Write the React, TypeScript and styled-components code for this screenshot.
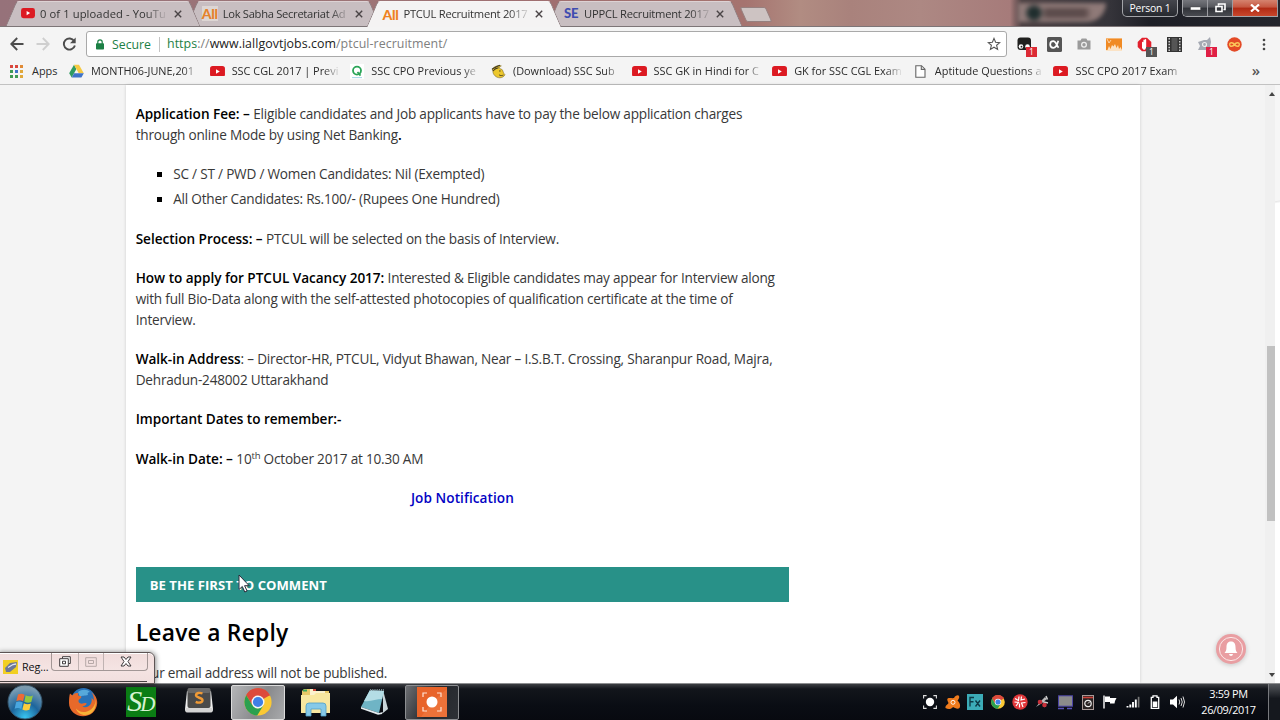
import React from "react";
import styled, { createGlobalStyle, css } from "styled-components";

const GlobalStyle = createGlobalStyle`
  * {
    box-sizing: border-box;
  }
  body {
    margin: 0;
    background: #fff;
    font-family: "Open Sans", "Noto Sans", sans-serif;
  }
  svg {
    display: block;
    flex: none;
  }
`;

const Screen = styled.div`
  position: relative;
  width: 1280px;
  height: 720px;
  overflow: hidden;
  display: flex;
  flex-direction: column;
`;

/* ---------- title bar ---------- */

const TitleBar = styled.header`
  height: 27px;
  flex: none;
  display: flex;
  justify-content: space-between;
  align-items: flex-start;
  padding: 0 2px 0 6px;
  border-bottom: 1px solid #7d7577;
  background: linear-gradient(
    90deg,
    #96727a 0,
    #9d7476 360px,
    #a06f70 560px,
    #a5736f 745px,
    #b18c82 800px,
    #a9827c 850px,
    #ad8883 920px,
    #a67b7a 1010px,
    #4a3f41 1022px,
    #35343a 1110px,
    #1e1f26 1150px,
    #24262d 1280px
  );
`;

const Tabs = styled.div`
  display: flex;
  position: relative;
  z-index: 1;
`;

const tabSide = css<{ $active?: boolean }>`
  content: "";
  position: absolute;
  top: 1px;
  bottom: 0;
  width: 51%;
  z-index: -1;
  background: ${(p) => (p.$active ? "#f4f3f3" : "#c8bec1")};
  border-top: 1px solid ${(p) => (p.$active ? "#f8f6f6" : "#ddd2d4")};
`;

const Tab = styled.div<{ $active?: boolean }>`
  position: relative;
  z-index: ${(p) => (p.$active ? 3 : 1)};
  width: 193px;
  height: ${(p) => (p.$active ? 27 : 26)}px;
  margin-right: -12.3px;
  padding: 1px 17px 0 15px;
  display: flex;
  align-items: center;
  isolation: isolate;
  &:first-child {
    z-index: 2;
  }
  &::before {
    ${tabSide}
    left: 5px;
    border-left: 1px solid #8b7b7e;
    border-radius: 3px 0 0 0;
    transform: skewX(-23deg);
  }
  &::after {
    ${tabSide}
    right: 4px;
    border-right: 1px solid #8b7b7e;
    border-radius: 0 3px 0 0;
    transform: skewX(23deg);
  }
  & > svg:last-child {
    margin-left: auto;
  }
`;

const TabTitle = styled.span<{ $ls?: number }>`
  width: 126px;
  margin-left: 5px;
  font-size: 11.2px;
  line-height: 16px;
  letter-spacing: ${(p) => p.$ls ?? -0.25}px;
  color: #333;
  white-space: nowrap;
  mask-image: linear-gradient(90deg, #000 84%, rgba(0, 0, 0, 0.15) 99%);
`;

const NewTab = styled.div`
  width: 26px;
  height: 15px;
  margin: 7px 0 0 14px;
  border: 1px solid #96807f;
  border-radius: 2px;
  background: #cdc3c2;
  transform: skewX(24deg);
`;

const WindowControls = styled.div`
  display: flex;
  align-items: flex-start;
`;

const Person = styled.div`
  width: 56px;
  height: 17px;
  margin-right: 4px;
  border: 1px solid #a3a4a8;
  border-top: none;
  border-radius: 0 0 5px 5px;
  background: linear-gradient(#45464d, #27292f);
  color: #fff;
  font-size: 10.4px;
  letter-spacing: -0.2px;
  line-height: 16px;
  text-align: center;
  white-space: nowrap;
`;

const ControlGroup = styled.div`
  display: flex;
  height: 17px;
  border: 1px solid #a3a4a8;
  border-top: none;
  border-right: none;
  border-radius: 0 0 0 5px;
  overflow: hidden;
`;

const Control = styled.div<{ $w: number; $close?: boolean }>`
  width: ${(p) => p.$w}px;
  display: flex;
  align-items: center;
  justify-content: center;
  border-right: 1px solid #9b9ca1;
  background: ${(p) =>
    p.$close
      ? "linear-gradient(#d5836f 0, #c55640 45%, #b02a14 50%, #c8472c)"
      : "linear-gradient(#75767c 0, #55575d 45%, #303238 50%, #484a50)"};
`;

const Blurred = styled.div`
  position: absolute;
  left: 1018px;
  top: 3px;
  width: 88px;
  height: 19px;
  border-radius: 0 0 22px 0;
  background: radial-gradient(circle at 16px 10px, #1f2e2e 5px, transparent 10px),
    linear-gradient(90deg, transparent 26%, #5c4c4c 32%, #5d4c4c 76%, transparent 84%) 0 5px / 100% 10px no-repeat,
    #8f7a78;
  filter: blur(2px);
`;

/* ---------- toolbar ---------- */

const Toolbar = styled.div`
  height: 31px;
  flex: none;
  display: flex;
  align-items: center;
  background: #f4f4f4;
  padding: 4px 0 1px 10px;
`;

const NavButtons = styled.div`
  display: flex;
  width: 76px;
  gap: 12px;
`;

const UrlBox = styled.div`
  width: 921px;
  height: 26px;
  display: flex;
  align-items: center;
  padding: 0 5px 0 9px;
  border: 1px solid #a9a9a9;
  border-radius: 3px;
  background: #fff;
  white-space: nowrap;
`;

const Secure = styled.span`
  width: 48px;
  margin-left: 8px;
  border-right: 1px solid #c4c4c4;
  font-size: 12.3px;
  line-height: 15px;
  color: #1c8045;
`;

const Url = styled.span`
  flex: 1;
  margin-left: 7px;
  font-size: 12.4px;
  line-height: 18px;
  letter-spacing: 0.05px;
  color: #808080;
`;

const Scheme = styled.span`
  color: #1c8045;
`;

const Host = styled.span`
  color: #222;
`;

const Extensions = styled.div`
  display: flex;
  margin-left: 2px;
`;

const Extension = styled.div`
  position: relative;
  width: 30px;
  height: 18px;
  display: flex;
  align-items: center;
  justify-content: center;
`;

const Badge = styled.span<{ $color: string }>`
  position: absolute;
  left: 17px;
  top: 12px;
  width: 11px;
  height: 10px;
  background: ${(p) => p.$color};
  color: #fff;
  font-size: 8.5px;
  line-height: 10px;
  text-align: center;
`;

const BookmarkBar = styled.nav`
  height: 27px;
  flex: none;
  display: flex;
  align-items: center;
  padding: 0 20px 0 10px;
  background: #f4f4f4;
  border-bottom: 1px solid #c2c2c2;
`;

const Bookmark = styled.div<{ $w?: number }>`
  flex: 0 0 ${(p) => p.$w ?? 140.65}px;
  display: flex;
  align-items: center;
`;

const BookmarkLabel = styled.span<{ $plain?: boolean }>`
  width: ${(p) => (p.$plain ? "auto" : "107px")};
  margin-left: ${(p) => (p.$plain ? 9 : 7)}px;
  font-size: 10.9px;
  line-height: 16px;
  color: #2b2b2b;
  white-space: nowrap;
  mask-image: ${(p) => (p.$plain ? "none" : "linear-gradient(90deg, #000 86%, rgba(0, 0, 0, 0.1) 100%)")};
`;

const Overflow = styled.span`
  margin-left: auto;
  padding-bottom: 2px;
  font-size: 15px;
  line-height: 16px;
  font-weight: 600;
  color: #555;
`;

/* ---------- page ---------- */

const Viewport = styled.main`
  flex: 1;
  min-height: 0;
  display: flex;
  background: #f4f4f4;
`;

const Sheet = styled.div`
  width: 1014px;
  margin-left: 126px;
  padding: 19px 0 0 9.7px;
  background: #fff;
  box-shadow: 0 0 3px rgba(0, 0, 0, 0.16);
  overflow: hidden;
`;

const Article = styled.article`
  width: 653.5px;
  color: #383838;
  font-size: 13.6px;
  line-height: 20.62px;
  letter-spacing: -0.21px;
  white-space: nowrap;
`;

const P = styled.p<{ $center?: boolean }>`
  margin: 0 0 18.9px;
  text-align: ${(p) => (p.$center ? "center" : "left")};
`;

const B = styled.strong`
  font-weight: 600;
  letter-spacing: -0.04px;
  color: #000;
`;

const Sup = styled.sup`
  font-size: 9.5px;
  line-height: 0;
  position: relative;
  top: -5px;
  vertical-align: baseline;
`;

const List = styled.ul`
  margin: 0 0 18.9px;
  padding: 0;
  list-style: none;
`;

const Item = styled.li`
  display: flex;
  align-items: center;
  padding-left: 21px;
  margin-bottom: 4.7px;
  &:last-child {
    margin-bottom: 0;
  }
  &::before {
    content: "";
    width: 5px;
    height: 5px;
    margin-right: 11.5px;
    background: #000;
  }
`;

const JobLink = styled.a`
  font-weight: 600;
  letter-spacing: 0.06px;
  color: #0303c4;
`;

const CommentBar = styled.h4`
  margin: 57.8px 0 0;
  height: 35.4px;
  padding-left: 14px;
  background: #289188;
  color: #fff;
  font-size: 13.1px;
  line-height: 36px;
  font-weight: 700;
  letter-spacing: 0.02px;
`;

const ReplyTitle = styled.h3`
  margin: 15px 0 14.6px;
  font-size: 22.8px;
  line-height: 31px;
  font-weight: 600;
  letter-spacing: 0.25px;
  color: #000;
`;

const ScrollTrack = styled.div`
  width: 10px;
  margin-left: auto;
  display: flex;
  flex-direction: column;
  align-items: center;
  justify-content: space-between;
  padding: 7px 0 6px 4px;
  background: #f0f0f0;
`;

const ScrollThumb = styled.div`
  width: 8px;
  height: 175px;
  margin: 97px 0 0 -2px;
  background: #c1c1c1;
`;

const Edge = styled.div`
  width: 5px;
  background: linear-gradient(170deg, #f6f6f6 0, #f6f6f6 114px, #e9e9e9 115px, #fff 117px);
`;

const Bell = styled.div`
  position: absolute;
  left: 1216px;
  top: 634px;
  width: 30px;
  height: 30px;
  border-radius: 50%;
  background: #e99ea2;
  box-shadow: 0 1px 5px rgba(0, 0, 0, 0.2);
`;

/* ---------- floating mini window ---------- */

const MiniWindow = styled.div`
  position: absolute;
  left: -2px;
  top: 652px;
  width: 157px;
  height: 32px;
  display: flex;
  align-items: flex-start;
  padding-left: 4px;
  border: 1px solid #5d5454;
  border-radius: 0 6px 0 0;
  background: linear-gradient(#f0dcdb, #f5e4e3 55%, #f1dedd);
  box-shadow: 1px 0 5px rgba(0, 0, 0, 0.45), inset 0 1px 0 #fff;
  &::after {
    content: "";
    position: absolute;
    left: 0;
    right: 7px;
    bottom: 1px;
    height: 1px;
    background: #4a4343;
  }
`;

const MiniTitle = styled.span`
  width: 29px;
  margin: 6px 0 0 3px;
  font-size: 10.8px;
  line-height: 15px;
  letter-spacing: -0.1px;
  color: #111;
`;

const MiniButtons = styled.div`
  display: flex;
  height: 18px;
  border: 1px solid #a39796;
  border-top: none;
  border-radius: 0 0 4px 4px;
`;

const MiniButton = styled.div<{ $w: number }>`
  width: ${(p) => p.$w}px;
  display: flex;
  align-items: center;
  justify-content: center;
  & + & {
    border-left: 1px solid #c0b3b2;
  }
`;

const Cursor = styled.svg`
  position: absolute;
  left: 238px;
  top: 574px;
`;

/* ---------- taskbar ---------- */

const Taskbar = styled.footer`
  position: relative;
  height: 37px;
  flex: none;
  display: flex;
  align-items: center;
  border-top: 1px solid #8d8e90;
  background: linear-gradient(#3c3e42 0, #12151b 5px, #0a0d14 60%, #080a10);
`;

const TaskButton = styled.div<{ $open?: "active" | "idle" }>`
  width: 58.2px;
  height: 36px;
  margin: 0;
  display: flex;
  align-items: center;
  justify-content: center;
  ${(p) =>
    p.$open &&
    css`
      width: 54.2px;
      margin: 0 2px;
      height: 35px;
      border: 1px solid ${p.$open === "active" ? "#dcdcdc" : "#8c8e91"};
      border-radius: 2px;
      background: ${p.$open === "active"
        ? "linear-gradient(115deg, #b5b6b8, #88898c 55%, #a9aaac)"
        : "linear-gradient(115deg, #6d6f73, #24272c 50%, #2e3136)"};
    `}
`;

const StartButton = styled.div`
  width: 54px;
  padding-left: 7px;
`;

const Tray = styled.div`
  margin-left: auto;
  display: flex;
  align-items: center;
`;

const TrayIcon = styled.div`
  width: 22.5px;
  display: flex;
  justify-content: center;
`;

const Clock = styled.div`
  width: 79px;
  font-size: 10.9px;
  line-height: 16px;
  letter-spacing: -0.35px;
  text-align: center;
  color: #fff;
`;

const ShowDesktop = styled.div`
  width: 12px;
  height: 36px;
  border-left: 1px solid #77797d;
  background: linear-gradient(#55585d, #15181e 40%);
`;

/* ---------- icons ---------- */

const YouTube = ({ size = 15 }: { size?: number }) => (
  <svg width={size} height={size * 0.73} viewBox="0 0 15 11">
    <rect width="15" height="11" rx="2.6" fill="#dc1a22" />
    <path d="M6 3.2v4.6l3.8-2.3z" fill="#fff" />
  </svg>
);

const CloseX = ({ color = "#4a4446", size = 8 }) => (
  <svg width={size} height={size} viewBox="0 0 8 8">
    <path d="M.8.8l6.4 6.4M7.2.8L.8 7.2" stroke={color} strokeWidth="1.4" />
  </svg>
);

const LetterIcon = styled.span<{ $color: string; $size?: number; $bg?: string; $w?: number }>`
  width: ${(p) => p.$w ?? 16}px;
  height: 15px;
  flex: none;
  font-family: Lato, "Open Sans", sans-serif;
  font-weight: 900;
  font-size: ${(p) => p.$size ?? 14}px;
  line-height: 15px;
  letter-spacing: -0.3px;
  text-align: center;
  color: ${(p) => p.$color};
  background: ${(p) => p.$bg ?? "transparent"};
`;

const ChromeLogo = ({ size }: { size: number }) => (
  <svg width={size} height={size} viewBox="0 0 28 28">
    <circle cx="14" cy="14" r="13.6" fill="#fbc934" />
    <path d="M14 14L2.2 7.2A13.6 13.6 0 0 1 25.8 7.2z" fill="#dd4a3c" />
    <path d="M14 7.5h12.1A13.6 13.6 0 0 0 2.2 7.2L8.4 17.5z" fill="#dd4a3c" />
    <path d="M2.2 7.2A13.6 13.6 0 0 0 13.2 27.6l6.3-10.3-5.6 3.2-5.5-3.2z" fill="#2ba04f" />
    <circle cx="14" cy="14" r="6.5" fill="#f5f5f5" />
    <circle cx="14" cy="14" r="5.1" fill="#3f7fe6" />
  </svg>
);

const AppsGrid = () => (
  <svg width="13" height="13" viewBox="0 0 13 13">
    {["#d9463c", "#d9463c", "#e08a35", "#3f9a54", "#3d74c9", "#e0a83a", "#3f9a54", "#3f9a54", "#e0a83a"].map(
      (c, i) => (
        <rect key={i} x={(i % 3) * 5} y={Math.floor(i / 3) * 5} width="3" height="3" fill={c} />
      )
    )}
  </svg>
);

const DriveIcon = () => (
  <svg width="15" height="14" viewBox="0 0 15 14">
    <path d="M5 .8L.2 9.2 2.7 13.4 7.4 5z" fill="#2f9b62" />
    <path d="M5 .8h5l4.8 8.4H9.8z" fill="#f6c941" />
    <path d="M5.1 9.2h9.7l-2.4 4.2H2.7z" fill="#3f73c8" />
  </svg>
);

const QIcon = () => (
  <svg width="14" height="15" viewBox="0 0 14 15">
    <rect width="14" height="15" fill="#fff" />
    <circle cx="7" cy="6.6" r="4" fill="none" stroke="#2aa557" strokeWidth="1.8" />
    <path d="M7.5 8l3 3.6" stroke="#2aa557" strokeWidth="1.8" />
    <path d="M2 13.6h10" stroke="#8cc9e0" strokeWidth=".8" />
  </svg>
);

const YellowFace = () => (
  <svg width="15" height="15" viewBox="0 0 16 15">
    <path d="M1.5 5C3 2 7 .8 11 1.5 9 2 8.5 3 9 4l3 1.6c1.2 1.8.8 3.4 2.8 5.2-.4 2-3 3.4-5.4 3.4C5.5 14.2 2 11 2 7z" fill="#ecc72c" stroke="#7a6520" strokeWidth=".6" />
    <path d="M1 5C3.500 4 5 2.500 9.500.8M2 7c2-2.400 4-3.400 6-3.600" fill="none" stroke="#3d3621" strokeWidth="1.100" />
    <path d="M9.500 6v1.800M8.500 11c1.600 1.200 3.400 1 4.800.2" fill="none" stroke="#3d3621" strokeWidth=".9" />
  </svg>
);

const FileIcon = () => (
  <svg width="11" height="13" viewBox="0 0 11 13">
    <path d="M.8.7h5.700l3.500 3.500v8.100H.8z" fill="#fff" stroke="#666" strokeWidth="1.100" />
    <path d="M6.300.7v3.700h3.700" fill="none" stroke="#666" strokeWidth="1.100" />
  </svg>
);

const FileSlot = styled.span`
  width: 15px;
  display: flex;
  justify-content: center;
`;

const BackIcon = ({ color, flip }: { color: string; flip?: boolean }) => (
  <svg width="14" height="14" viewBox="0 0 14 14">
    <path
      d="M7.200 1L1.300 7l5.900 6M1.500 7h12"
      fill="none"
      stroke={color}
      strokeWidth="1.900"
      transform={flip ? "translate(14 0) scale(-1 1)" : undefined}
    />
  </svg>
);

const ReloadIcon = () => (
  <svg width="15" height="14" viewBox="0 0 15 14">
    <path d="M12.200 4A5.600 5.600 0 1 0 12.900 8.500" fill="none" stroke="#4c4c4c" strokeWidth="1.900" />
    <path d="M13.700.4v5.800H8z" fill="#4c4c4c" />
  </svg>
);

const LockIcon = () => (
  <svg width="8" height="11" viewBox="0 0 8 11">
    <rect y="4.200" width="8" height="6.300" rx=".8" fill="#1c8045" />
    <path d="M1.800 5V3a2.200 2.200 0 0 1 4.400 0v2" fill="none" stroke="#1c8045" strokeWidth="1.200" />
  </svg>
);

const StarIcon = () => (
  <svg width="14" height="14" viewBox="0 0 14 14">
    <path d="M7 1.400l1.600 3.900 4.200.3-3.200 2.700 1 4.100L7 10.200l-3.600 2.200 1-4.100L1.200 5.600l4.200-.3z" fill="none" stroke="#555" strokeWidth="1.100" />
  </svg>
);

const MonkeyIcon = () => (
  <svg width="15" height="14" viewBox="0 0 15 14">
    <rect x=".5" y=".5" width="13.500" height="12.500" rx="3" fill="#20201f" />
    <circle cx="4" cy="9.500" r="2.300" fill="#fff" />
    <circle cx="10.500" cy="9.500" r="2.300" fill="#fff" />
    <circle cx="4.500" cy="9.700" r=".9" fill="#222" />
  </svg>
);

const AlphaIcon = () => (
  <svg width="15" height="15" viewBox="0 0 15 15">
    <rect width="15" height="15" rx="1.500" fill="#555" />
    <path d="M11.300 3.800C10 9 8.500 10.800 6.300 10.800 4.400 10.800 3.200 9.400 3.200 7.500S4.400 4.200 6.300 4.200c2.500 0 3.300 4 5.200 6.500" fill="none" stroke="#fff" strokeWidth="1.700" />
  </svg>
);

const CameraIcon = () => (
  <svg width="14" height="12" viewBox="0 0 14 12">
    <path d="M.5 2.500h3L4.700.5h4.600l1.200 2h3v9H.5z" fill="#9b9b9b" />
    <circle cx="7" cy="6.700" r="3" fill="#eee" />
    <circle cx="7" cy="6.700" r="1.700" fill="#9b9b9b" />
  </svg>
);

const ChartIcon = () => (
  <svg width="16" height="13" viewBox="0 0 16 13">
    <rect width="16" height="13" fill="#fbe3c6" />
    <path d="M0 .5h16v11.500l-1.500-3L13 11l-1-4-1.500 3-1.500-4-1.500 2.500L6 7l-1.500 4-1.500-3L1.500 12H0z" fill="#f08a24" />
    <path d="M1 1l2 4 2-3" fill="none" stroke="#fbd9b4" strokeWidth=".9" />
  </svg>
);

const HandIcon = () => (
  <svg width="15" height="15" viewBox="0 0 15 15">
    <path d="M5 .7h5L14.300 5v5L10 14.300H5L.7 10V5z" fill="#e2202d" />
    <path d="M5 11V5.500c0-1 1.400-1 1.400 0V3.200c0-1 1.400-1 1.400 0v-.4c0-1 1.400-1 1.400 0v7.700L8 12.800H6.500z" fill="#fff" />
  </svg>
);

const FilmIcon = () => (
  <svg width="15" height="15" viewBox="0 0 15 15">
    <rect width="15" height="15" fill="#333" />
    <rect x="4.500" y="1" width="6" height="13" fill="#555" />
    <path d="M2.200 1v14M12.800 1v14" stroke="#ddd" strokeWidth="1.400" strokeDasharray="1.500 1.400" />
  </svg>
);

const CatIcon = () => (
  <svg width="15" height="14" viewBox="0 0 15 14">
    <path d="M1 13l2-4-2-4 3-1 3-1 3 0 3-3 1 5-1 5 1 3H8z" fill="#a5a9b3" />
    <circle cx="7.500" cy="7.500" r="2" fill="none" stroke="#eee" strokeWidth="1.200" />
  </svg>
);

const InfinityIcon = () => (
  <svg width="15" height="15" viewBox="0 0 15 15">
    <circle cx="7.500" cy="7.500" r="7.200" fill="#e34a26" />
    <path d="M7.500 7.500C6 5.300 2.700 5 2.700 7.500s3.300 2.200 4.800 0 4.800-2.500 4.800 0-3.300 2.200-4.800 0z" fill="none" stroke="#fbc85a" strokeWidth="1.400" />
  </svg>
);

const MenuDots = () => (
  <svg width="4" height="13" viewBox="0 0 4 13">
    <circle cx="2" cy="2" r="1.300" fill="#444" />
    <circle cx="2" cy="6.500" r="1.300" fill="#444" />
    <circle cx="2" cy="11" r="1.300" fill="#444" />
  </svg>
);

const StartOrb = () => (
  <svg width="36" height="36" viewBox="0 0 36 36">
    <defs>
      <radialGradient id="orb" cx=".5" cy=".95" r=".95">
        <stop offset="0" stopColor="#38c5f0" />
        <stop offset=".45" stopColor="#1d659c" />
        <stop offset="1" stopColor="#8fa9b8" />
      </radialGradient>
    </defs>
    <circle cx="18" cy="18" r="17" fill="url(#orb)" stroke="#33546b" />
    <path d="M11 10.500c2.500-1.300 4.500-1 6.600.2l-1.500 6.500c-2.100-1.200-4.200-1.300-6.700-.3z" fill="#ee6a35" />
    <path d="M18.700 11.300c2.600 1.300 4.500 1.300 7.200.1l-1.600 6.600c-2.500 1-4.500.9-7-.3z" fill="#94c83f" />
    <path d="M9.100 18.200c2.500-1 4.600-.8 6.700.4l-1.500 6.300c-2.200-1.200-4.200-1.300-6.700-.2z" fill="#49a6df" />
    <path d="M16.900 19.200c2.400 1.200 4.500 1.200 7 .2l-1.500 6.300c-2.600 1.100-4.600 1-7-.2z" fill="#fbcd3c" />
  </svg>
);

const FirefoxIcon = () => (
  <svg width="30" height="30" viewBox="0 0 30 30">
    <circle cx="15.500" cy="13.500" r="12.500" fill="#2872b8" />
    <path d="M10 5c4-3 9-3 12 0-2 0-3 1-2 3-3 1-6 0-8 2z" fill="#57a9db" />
    <path d="M2 6.500l2.500 2C6 6 8.500 5.500 10.500 6.300 9.500 8 10 9 12.500 9.300c1.500.2 1 1.700-1.200 3-1.300 1.500-1 3 .7 4 2.500 1.300 4.500-.8 6.500 0 .5 1.400-2 3-4.500 3.300 6 2.400 11-2.600 9.500-8.600 1.500 1 2 2 2.200 3 .6-3-.5-6.500-2.500-8.700 4 2.500 6.300 6.500 6 11C28.600 24 22.500 29.300 15 29.300S1 23.500 1 16C1 12 1.200 9 2 6.500z" fill="#e8692a" />
    <path d="M27 10c1.700 6-1.500 12.500-8 14.500-5 1.500-9-.5-11-3 1 4 5 6.500 9 6.500 7 0 13-6 10-18z" fill="#f7b337" />
  </svg>
);

const SdIcon = styled.div`
  display: flex;
  width: 30px;
  height: 30px;
  padding-left: 1px;
  background: #0b7d14;
  color: #d6f3d3;
  font-family: "Liberation Serif", "Times New Roman", serif;
  font-style: italic;
  font-size: 30px;
  line-height: 27px;
  white-space: nowrap;
`;

const SdSmall = styled.span`
  margin-left: -2px;
  padding-top: 4px;
  font-size: 21px;
  line-height: 26px;
`;

const SublimeIcon = () => (
  <svg width="30" height="30" viewBox="0 0 30 30">
    <path d="M3 4h24l2 18q0 3-2 3H3q-2 0-2-3z" fill="#eee" />
    <path d="M1.500 21h27v3q0 1.500-2 1.500h-23q-2 0-2-1.500z" fill="#d4d4d4" />
    <rect x="3.500" y="1" width="23" height="20" rx="2" fill="#4a4a4a" />
    <rect x="3.500" y="1" width="23" height="5" rx="2" fill="#686868" />
    <path d="M18.500 6.500c-2.500-1-6.500-.8-6.500 1.800s6.500 2.300 6.500 4.900-4 3-6.800 1.700" fill="none" stroke="#f09a35" strokeWidth="2.400" />
  </svg>
);

const ExplorerIcon = () => (
  <svg width="32" height="30" viewBox="0 0 32 30">
    <path d="M2 4l2-2h7l1 2h17v22H2z" fill="#e8c868" />
    <path d="M10 2h5l1 2h9v6H10z" fill="#fbf2cd" />
    <path d="M1 8h13l2-2h14v20H1z" fill="#f8e7a0" />
    <path d="M3 3.500h4" stroke="#3aa65b" strokeWidth="2" />
    <path d="M13 3h3" stroke="#d0473b" strokeWidth="2" />
    <path d="M6 29V19q0-3 3-3h14q3 0 3 3v10h-5v-7H11v7z" fill="#86c9e8" stroke="#4f9fc6" strokeWidth=".8" />
  </svg>
);

const NotepadIcon = () => (
  <svg width="30" height="30" viewBox="0 0 30 30">
    <path d="M24 3l5 19-5 4z" fill="#c9d5d9" />
    <path d="M11 3l14 1-5 22L2 20z" fill="#6fb4c5" />
    <path d="M11 3l14 1-2 8C17 12 12 15 5 14z" fill="#b4dde5" />
    <path d="M2 20l18 6 4-1-1 2-4 .7L2 21.700z" fill="#e4edf0" />
    <path d="M11 3h14" stroke="#7d8d93" strokeWidth="2" strokeDasharray="1.200 1" />
  </svg>
);

const CaptureIcon = () => (
  <svg width="30" height="30" viewBox="0 0 30 30">
    <rect width="30" height="30" fill="#e8642a" />
    <path d="M15 15L30 2v28H4z" fill="#ef7b45" opacity=".6" />
    <path d="M6 10V6h4M20 6h4v4M24 20v4h-4M10 24H6v-4" fill="none" stroke="#fde3d6" strokeWidth="1.200" />
    <circle cx="15" cy="15" r="5.500" fill="#fff" />
  </svg>
);

const trayIcons = [
  <svg width="14" height="14" viewBox="0 0 14 14">
    <path d="M.6 3.500V.6h3M10.400.6h3v2.900M13.400 10.400v3h-3M3.600 13.400h-3v-3" fill="none" stroke="#ddd" strokeWidth="1.100" />
    <circle cx="7" cy="7" r="4.200" fill="#fff" />
  </svg>,
  <svg width="16" height="15" viewBox="0 0 16 15">
    <path d="M9 3c1-2 3-3 4.500-2.500C15 1.500 14 4 12.500 5.500c2 2 3.500 5 2 7.500-2 2-5-.5-6.500-1-2 2.500-5 2.500-7.500 1C0 10.500 2.500 10 3.500 8 2.500 6 1.500 4 3 3.300 5 2.500 7 3.500 9 3z" fill="#ef7b1d" />
    <circle cx="8" cy="7.300" r="2" fill="none" stroke="#fff" strokeWidth=".9" />
  </svg>,
  <svg width="16" height="16" viewBox="0 0 16 16">
    <rect width="16" height="16" fill="#3cacb8" />
    <path d="M3 12.500v-9h4M3 7.800h3.500M8.500 6.500l4.500 6M13 6.500l-4.500 6" fill="none" stroke="#0d3a47" strokeWidth="1.400" />
  </svg>,
  <ChromeLogo size={14} />,
  <svg width="16" height="16" viewBox="0 0 16 16">
    <circle cx="8" cy="8" r="7.700" fill="#e0373a" />
    <path d="M7 2.500l-.5 4-3.500-2M9.500 2.500L9 6l4-1M2.500 8l4 .5L4 12M13.500 8.500L9.500 9l1.500 4M7.500 13.500V9.500" fill="none" stroke="#fff" strokeWidth="1.200" />
  </svg>,
  <svg width="15" height="14" viewBox="0 0 15 14">
    <path d="M1 12l5-6 4-4 2 2-5 4z" fill="#b9b9b9" />
    <path d="M11 1l1.500 3.500M13 8l-4-1 1 5" stroke="#d0d0d0" strokeWidth="1.500" />
    <circle cx="5" cy="7" r="2.300" fill="#c9313b" />
    <circle cx="9.500" cy="10" r="2.300" fill="#c9313b" />
  </svg>,
  <svg width="15" height="15" viewBox="0 0 15 15">
    <rect x=".5" y=".8" width="14" height="10.400" fill="#8b8b8b" stroke="#4a43a5" />
    <path d="M0 13.500h6M9 13.500h5" stroke="#5850b8" strokeWidth="1.600" />
  </svg>,
  <svg width="12" height="15" viewBox="0 0 12 15">
    <rect x=".5" y=".5" width="11" height="14" fill="#292323" stroke="#a89a98" />
    <path d="M1 2.500h10" stroke="#cc4038" strokeWidth="1.600" />
    <circle cx="6" cy="8.500" r="3.200" fill="none" stroke="#eee" strokeWidth="1.200" />
    <path d="M6 8.500l1.500-1.500" stroke="#eee" />
  </svg>,
  <svg width="14" height="14" viewBox="0 0 14 14">
    <path d="M1 .5v13" stroke="#fff" strokeWidth="1.400" />
    <path d="M2 1.500h5v1.500h6.500L12 6l-.5 2.500H7V7H2z" fill="#fff" />
  </svg>,
  <svg width="14" height="12" viewBox="0 0 14 12">
    <path d="M1.500 10v1.500M4.300 8.500v3M7 6v5.500M9.800 3.500v8" stroke="#fff" strokeWidth="1.900" />
    <path d="M12.600.8v10.700" stroke="#777" strokeWidth="1.700" />
  </svg>,
  <svg width="10" height="14" viewBox="0 0 10 14">
    <path d="M3 .8h4v1.500h1.700v11H1.300v-11H3z" fill="none" stroke="#fff" strokeWidth="1.300" />
    <rect x="2.700" y="6.500" width="4.600" height="5.500" fill="#fff" />
  </svg>,
  <svg width="15" height="14" viewBox="0 0 15 14">
    <path d="M0 4.500h3L7 .8v12.400L3 9.500H0z" fill="#fff" />
    <path d="M9 4.500q1.500 2.500 0 5M11 3q2.500 4 0 8M13 1.500q3 5.500 0 11" fill="none" stroke="#ddd" strokeWidth="1" />
  </svg>,
];

const App = () => {
  return (
    <Screen>
      <GlobalStyle />
      <TitleBar>
        <Tabs>
          <Tab>
            <YouTube size={14} />
            <TabTitle $ls={0.1}>0 of 1 uploaded - YouTu</TabTitle>
            <CloseX />
          </Tab>
          <Tab>
            <LetterIcon $color="#e5822c" $bg="#ddd6d4">All</LetterIcon>
            <TabTitle $ls={-0.3}>Lok Sabha Secretariat Ad</TabTitle>
            <CloseX />
          </Tab>
          <Tab $active>
            <LetterIcon $color="#ef8222">All</LetterIcon>
            <TabTitle>PTCUL Recruitment 2017</TabTitle>
            <CloseX />
          </Tab>
          <Tab>
            <LetterIcon $color="#3f4db0" $size={13}>SE</LetterIcon>
            <TabTitle>UPPCL Recruitment 2017</TabTitle>
            <CloseX />
          </Tab>
          <NewTab />
        </Tabs>
        <Blurred />
        <WindowControls>
          <Person>Person 1</Person>
          <ControlGroup>
            <Control $w={25}>
              <svg width="11" height="5" viewBox="0 0 11 5">
                <rect x=".5" y="1" width="10" height="3" fill="#fff" stroke="#444" strokeWidth=".4" />
              </svg>
            </Control>
            <Control $w={25}>
              <svg width="11" height="10" viewBox="0 0 11 10">
                <path d="M3.500 2.500V1H10v5.500H8.500M1 3.500h6v5H1z" fill="none" stroke="#fff" strokeWidth="1.600" />
              </svg>
            </Control>
            <Control $w={45} $close>
              <svg width="10" height="8" viewBox="0 0 10 8">
                <path d="M1 .5l8 7M9 .5l-8 7" stroke="#fff" strokeWidth="2.200" />
              </svg>
            </Control>
          </ControlGroup>
        </WindowControls>
      </TitleBar>

      <Toolbar>
        <NavButtons>
          <BackIcon color="#4c4c4c" />
          <BackIcon color="#cfcfcf" flip />
          <ReloadIcon />
        </NavButtons>
        <UrlBox>
          <LockIcon />
          <Secure>Secure</Secure>
          <Url>
            <Scheme>https</Scheme>://<Host>www.iallgovtjobs.com</Host>/ptcul-recruitment/
          </Url>
          <StarIcon />
        </UrlBox>
        <Extensions>
          <Extension>
            <MonkeyIcon />
            <Badge $color="#dc2a35">1</Badge>
          </Extension>
          <Extension><AlphaIcon /></Extension>
          <Extension><CameraIcon /></Extension>
          <Extension><ChartIcon /></Extension>
          <Extension>
            <HandIcon />
            <Badge $color="#555">1</Badge>
          </Extension>
          <Extension><FilmIcon /></Extension>
          <Extension>
            <CatIcon />
            <Badge $color="#e01f45">1</Badge>
          </Extension>
          <Extension><InfinityIcon /></Extension>
          <Extension><MenuDots /></Extension>
        </Extensions>
      </Toolbar>

      <BookmarkBar>
        <Bookmark $w={59}>
          <AppsGrid />
          <BookmarkLabel $plain>Apps</BookmarkLabel>
        </Bookmark>
        <Bookmark>
          <DriveIcon />
          <BookmarkLabel>MONTH06-JUNE,201</BookmarkLabel>
        </Bookmark>
        <Bookmark>
          <YouTube />
          <BookmarkLabel>SSC CGL 2017 | Previ</BookmarkLabel>
        </Bookmark>
        <Bookmark>
          <QIcon />
          <BookmarkLabel>SSC CPO Previous ye</BookmarkLabel>
        </Bookmark>
        <Bookmark>
          <YellowFace />
          <BookmarkLabel>(Download) SSC Sub</BookmarkLabel>
        </Bookmark>
        <Bookmark>
          <YouTube />
          <BookmarkLabel>SSC GK in Hindi for C</BookmarkLabel>
        </Bookmark>
        <Bookmark>
          <YouTube />
          <BookmarkLabel>GK for SSC CGL Exam</BookmarkLabel>
        </Bookmark>
        <Bookmark>
          <FileSlot>
            <FileIcon />
          </FileSlot>
          <BookmarkLabel>Aptitude Questions a</BookmarkLabel>
        </Bookmark>
        <Bookmark>
          <YouTube />
          <BookmarkLabel>SSC CPO 2017 Exam</BookmarkLabel>
        </Bookmark>
        <Overflow>»</Overflow>
      </BookmarkBar>

      <Viewport>
        <Sheet>
          <Article>
            <P>
              <B>Application Fee: – </B>Eligible candidates and Job applicants have to pay the below application charges
              <br />
              through online Mode by using Net Banking<B>.</B>
            </P>
            <List>
              <Item>SC / ST / PWD / Women Candidates: Nil (Exempted)</Item>
              <Item>All Other Candidates: Rs.100/- (Rupees One Hundred)</Item>
            </List>
            <P>
              <B>Selection Process: – </B>PTCUL will be selected on the basis of Interview.
            </P>
            <P>
              <B>How to apply for PTCUL Vacancy 2017:</B> Interested &amp; Eligible candidates may appear for Interview along
              <br />
              with full Bio-Data along with the self-attested photocopies of qualification certificate at the time of
              <br />
              Interview.
            </P>
            <P>
              <B>Walk-in Address</B>: – Director-HR, PTCUL, Vidyut Bhawan, Near – I.S.B.T. Crossing, Sharanpur Road, Majra,
              <br />
              Dehradun-248002 Uttarakhand
            </P>
            <P>
              <B>Important Dates to remember:-</B>
            </P>
            <P>
              <B>Walk-in Date: – </B>10<Sup>th</Sup> October 2017 at 10.30 AM
            </P>
            <P $center>
              <JobLink>Job Notification</JobLink>
            </P>
            <CommentBar>BE THE FIRST TO COMMENT</CommentBar>
            <ReplyTitle>Leave a Reply</ReplyTitle>
            <P>Your email address will not be published.</P>
          </Article>
        </Sheet>
        <ScrollTrack>
          <svg width="6" height="4" viewBox="0 0 6 4"><path d="M0 4l3-4 3 4z" fill="#444" /></svg>
          <ScrollThumb />
          <svg width="6" height="4" viewBox="0 0 6 4"><path d="M0 0l3 4 3-4z" fill="#444" /></svg>
        </ScrollTrack>
        <Edge />
      </Viewport>

      <Taskbar>
        <StartButton><StartOrb /></StartButton>
        <TaskButton><FirefoxIcon /></TaskButton>
        <TaskButton>
          <SdIcon>
            S<SdSmall>D</SdSmall>
          </SdIcon>
        </TaskButton>
        <TaskButton><SublimeIcon /></TaskButton>
        <TaskButton $open="active"><ChromeLogo size={28} /></TaskButton>
        <TaskButton><ExplorerIcon /></TaskButton>
        <TaskButton><NotepadIcon /></TaskButton>
        <TaskButton $open="idle"><CaptureIcon /></TaskButton>
        <Tray>
          {trayIcons.map((icon, i) => (
            <TrayIcon key={i}>{icon}</TrayIcon>
          ))}
          <Clock>
            3:59 PM
            <br />
            26/09/2017
          </Clock>
          <ShowDesktop />
        </Tray>
      </Taskbar>

      <Bell>
        <svg width="30" height="30" viewBox="0 0 30 30">
          <circle cx="15" cy="15" r="11.600" fill="none" stroke="#fbe9e9" strokeWidth="1" />
          <path d="M15 7.500c-3.500 0-4.500 2.500-4.500 5.500 0 3.500-.8 4.500-2 6h13c-1.200-1.500-2-2.500-2-6 0-3-1-5.500-4.500-5.500z" fill="#fff" />
          <path d="M13 20h4q-.3 2-2 2t-2-2z" fill="#fff" />
        </svg>
      </Bell>

      <MiniWindow>
        <svg width="16" height="22" viewBox="0 0 16 22">
          <rect y="7" width="15" height="14" fill="#f2cf22" />
          <path d="M2 15l5-5 7-1-1 5-6 5H3z" fill="#6d7796" />
          <path d="M5 14.500l5-3 3-.5" stroke="#dfe4f2" strokeWidth="1.300" fill="none" />
        </svg>
        <MiniTitle>Reg...</MiniTitle>
        <MiniButtons>
          <MiniButton $w={26}>
            <svg width="12" height="11" viewBox="0 0 12 11">
              <path d="M3.500 2.500V.7h7.800v6.800H9.500M.7 2.700h8.600v7.600H.7zM3.500 5.200h3v2.600h-3z" fill="#fff" stroke="#3f3b3d" strokeWidth="1" />
            </svg>
          </MiniButton>
          <MiniButton $w={25}>
            <svg width="12" height="10" viewBox="0 0 12 10">
              <path d="M.7.7h10.600v8.600H.7zM3.500 3.500h5v3h-5z" fill="none" stroke="#b7a9a8" strokeWidth="1" />
            </svg>
          </MiniButton>
          <MiniButton $w={44}>
            <svg width="12" height="11" viewBox="0 0 12 11">
              <path d="M1 1h3l2 2.500L8 1h3L8 5.500 11 10H8L6 7.500 4 10H1l3-4.500z" fill="#fff" stroke="#3f3b3d" strokeWidth="1" />
            </svg>
          </MiniButton>
        </MiniButtons>
      </MiniWindow>

      <Cursor width="13" height="20" viewBox="0 0 13 20">
        <path d="M1 1v14.500l3.300-3 2.500 5.500 2.300-1-2.500-5.300h4.600z" fill="#fff" stroke="#2a2a3a" strokeWidth="1" />
      </Cursor>
    </Screen>
  );
};

export default App;
